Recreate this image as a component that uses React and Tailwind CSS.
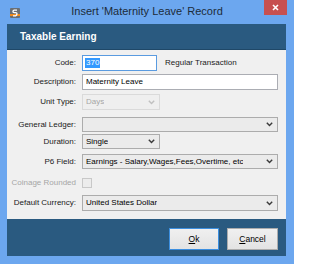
const font = { fontFamily: '"Liberation Sans", Arial, sans-serif' }

function AppIcon() {
  return (
    <svg width="10" height="10" viewBox="0 0 10 10" className="shrink-0">
      <rect x="0" y="0" width="10" height="10" rx="1" fill="#6b6f74" />
      <rect x="0" y="6" width="10" height="2" fill="#f08a1c" />
      <path d="M7 2.2H4.2Q3 2.2 3 3.4T4.2 4.6H5.8Q7 4.6 7 5.8T5.8 7.8H3" fill="none" stroke="#fff" strokeWidth="1.3" />
    </svg>
  )
}

function Chevron({ disabled }) {
  return (
    <svg width="7" height="5" viewBox="0 0 7 5" className="shrink-0">
      <path d="M0.8 0.8L3.5 3.6L6.2 0.8" fill="none" stroke={disabled ? '#c0c0c0' : '#3a3a3a'} strokeWidth="1.4" />
    </svg>
  )
}

function Label({ children, disabled }) {
  return (
    <div className={`w-[70px] shrink-0 text-right pr-[1px] ${disabled ? 'text-[#a6a6a6]' : 'text-[#1a1a1a]'}`}>
      {children}
    </div>
  )
}

function Combo({ value, wide, disabled, h = 'h-[15px]' }) {
  return (
    <div
      className={`${wide ? 'w-[196px]' : 'w-[78px]'} ${h} flex items-center justify-between pl-[3px] pr-[4px] border ${
        disabled ? 'border-[#dadada] bg-[#efefef] text-[#a6a6a6]' : 'border-[#acacac] bg-[#ebebeb] text-black'
      }`}
    >
      <span className="truncate">{value}</span>
      <Chevron disabled={disabled} />
    </div>
  )
}

function Row({ label, mt, disabled, children }) {
  return (
    <div className={`flex items-center gap-[5px] ${mt}`}>
      <Label disabled={disabled}>{label}</Label>
      {children}
    </div>
  )
}

function Button({ children, primary }) {
  return (
    <button
      type="button"
      className={`h-[22px] flex items-center justify-center border text-[8.5px] text-black bg-gradient-to-b from-[#f0f0f0] to-[#e3e3e3] ${
        primary ? 'w-[50px] border-[#3c8fe0]' : 'w-[51px] border-[#acacac]'
      }`}
    >
      {children}
    </button>
  )
}

export default function App() {
  return (
    <div className="w-[294px] h-[264px] bg-[#6ca7ef] flex flex-col overflow-hidden" style={font}>
      {/* title bar */}
      <div className="relative h-[24px] shrink-0 flex items-center">
        <div className="pl-[10px] pt-[1px]">
          <AppIcon />
        </div>
        <div className="absolute inset-x-0 top-[3px] text-center text-[11px] text-[#1c2b3a]">
          Insert 'Maternity Leave' Record
        </div>
        <div className="absolute right-[7px] top-0 w-[23px] h-[15px] bg-[#c75050] flex items-center justify-center">
          <svg width="7" height="7" viewBox="0 0 7 7">
            <path d="M1 1L6 6M6 1L1 6" stroke="#fff" strokeWidth="1.6" />
          </svg>
        </div>
      </div>

      <div className="ml-[7px] mr-[8px] flex flex-col">
        {/* header */}
        <div className="h-[26px] bg-[#2a5a80] flex items-center pl-[13px] text-white text-[10px] font-bold border-b border-[#1f4868]">
          Taxable Earning
        </div>

        {/* form */}
        <div className="h-[169px] bg-[#f0f0f0] text-[8px] flex flex-col pt-[5px]">
          <Row label="Code:">
            <div className="w-[75px] h-[16px] bg-white border border-[#5a9be0] flex items-center pl-[2px]">
              <span className="bg-[#3399ff] text-white px-[1px] leading-[10px]">370</span>
            </div>
            <span className="ml-[3px] text-[#1a1a1a]">Regular Transaction</span>
          </Row>
          <Row label="Description:" mt="mt-[3px]">
            <div className="w-[196px] h-[16px] bg-white border border-[#abadb3] flex items-center pl-[3px]">
              Maternity Leave
            </div>
          </Row>
          <Row label="Unit Type:" mt="mt-[4px]">
            <Combo value="Days" disabled h="h-[16px]" />
          </Row>
          <Row label="General Ledger:" mt="mt-[7px]">
            <Combo value="" wide />
          </Row>
          <Row label="Duration:" mt="mt-[2px]">
            <Combo value="Single" />
          </Row>
          <Row label="P6 Field:" mt="mt-[5px]">
            <Combo value="Earnings - Salary,Wages,Fees,Overtime, etc" wide />
          </Row>
          <Row label="Coinage Rounded" mt="mt-[8px]" disabled>
            <div className="w-[10px] h-[10px] border border-[#c8c8c8] bg-[#ececec]" />
          </Row>
          <Row label="Default Currency:" mt="mt-[6px]">
            <Combo value="United States Dollar" wide h="h-[16px]" />
          </Row>
        </div>

        {/* footer */}
        <div className="h-[37px] bg-[#2a5a80] flex items-start justify-end gap-[8px] pt-[9px] pr-[8px]">
          <Button primary>
            <span className="underline">O</span>k
          </Button>
          <Button>
            <span className="underline">C</span>ancel
          </Button>
        </div>
      </div>
    </div>
  )
}
